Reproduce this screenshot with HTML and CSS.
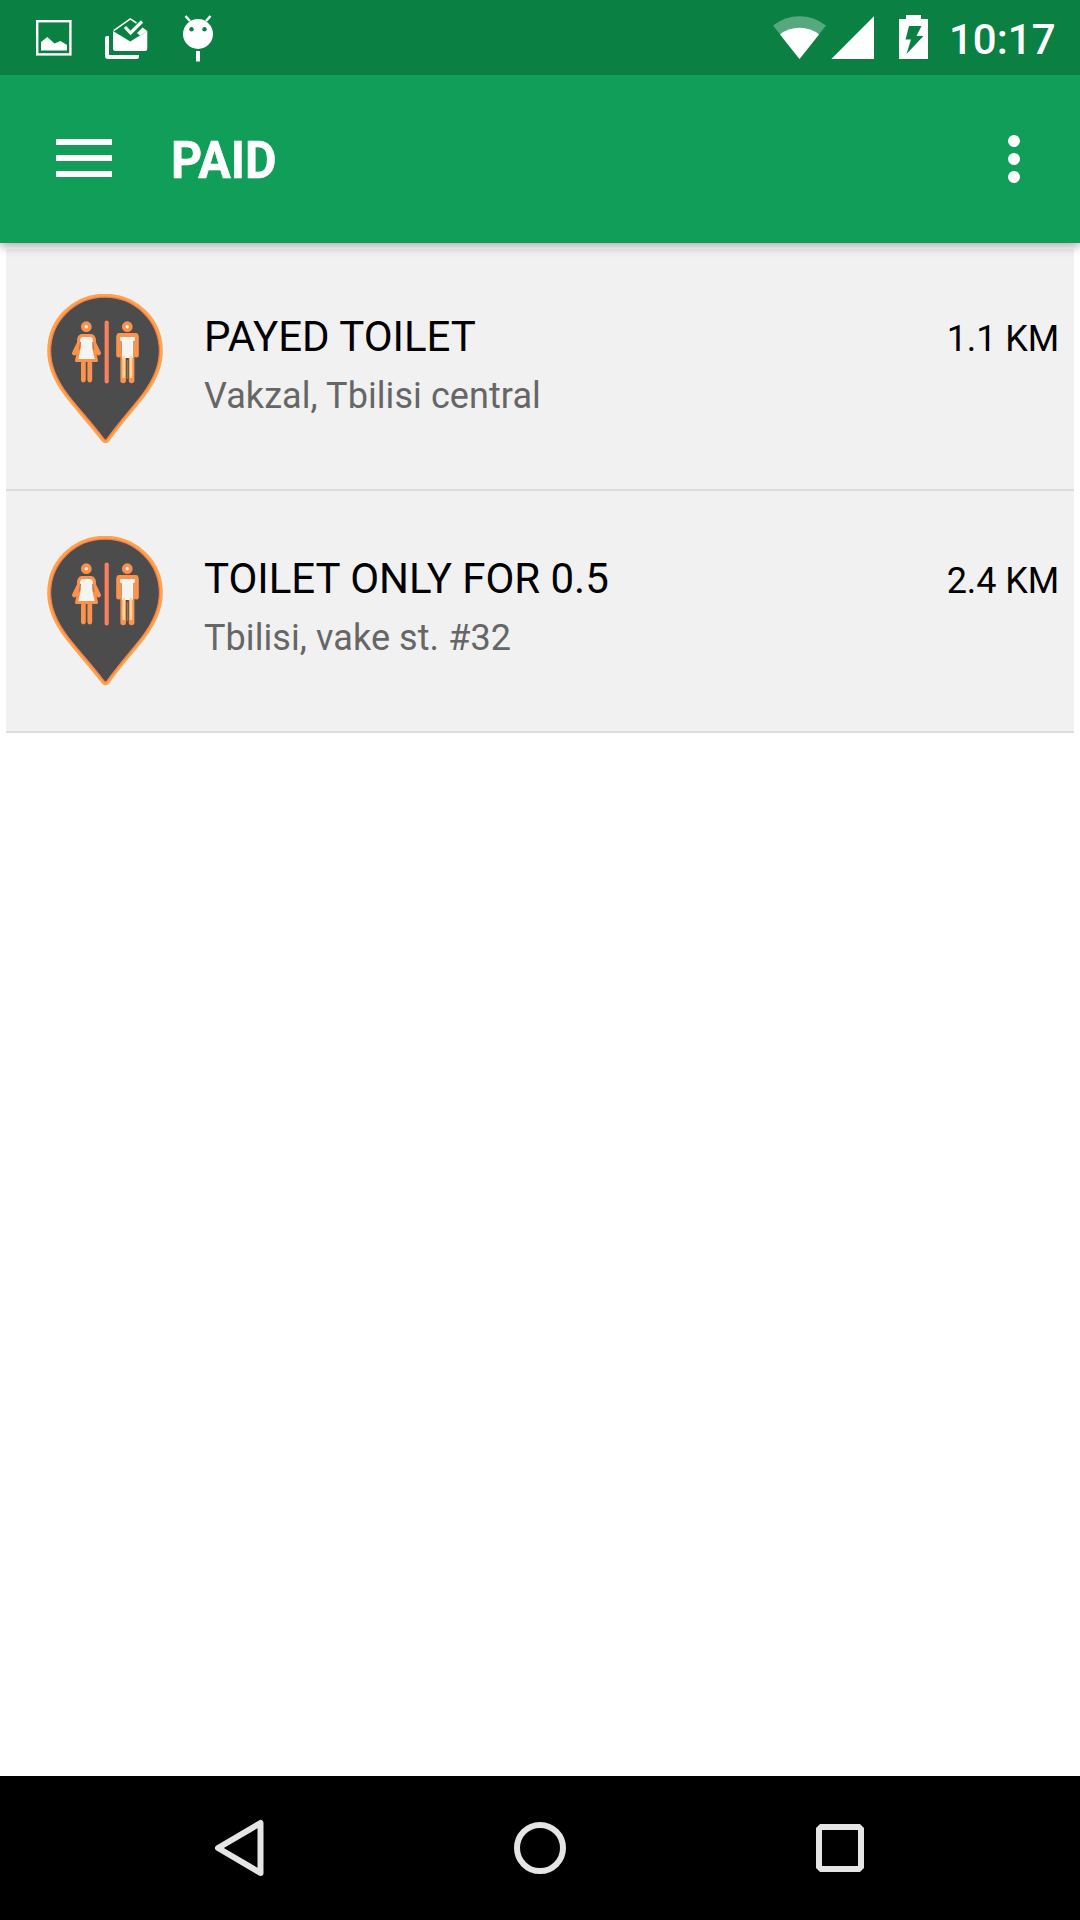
FILE: index.html
```html
<!DOCTYPE html>
<html lang="en">
<head>
<meta charset="utf-8">
<title>Paid</title>
<link rel="stylesheet" href="styles.css">
</head>
<body>
<svg class="defs" width="0" height="0" aria-hidden="true">
  <defs>
    <symbol id="pin" viewBox="0 0 116 150">
      <path d="M58 1.500C27 1.500 2 26 2 57C2 75 10 89 20 102C30 115 43 129 56 146Q58.500 149 61 146C73 129 86 115 96 102C106 89 114 75 114 57C114 26 89 1.500 58 1.500Z" fill="#4c4c4c" stroke="#ffa24b" stroke-width="3.600"/>
      <path d="M58 3.200C28 3.200 3.600 27 3.600 57C3.600 74 11 88 21 101C31 114 45 129 57 145Q58.500 147 60 145C72 129 85 114 95 101C105 88 112.400 74 112.400 57C112.400 27 88 3.200 58 3.200Z" fill="none" stroke="#ef7d4f" stroke-width="1.200"/>
      <path d="M59.700 28.500V87.500" stroke="#f97f5d" stroke-width="4.200" stroke-linecap="round"/>
      <g fill="#fff0dc" stroke="#fb8f4e" stroke-width="3.600">
        <circle cx="39.300" cy="32.700" r="3.600"/>
        <circle cx="80.300" cy="32.700" r="3.600"/>
      </g>
      <g stroke="#fb934e" stroke-linecap="round" stroke-linejoin="round" fill="none">
        <path d="M36.400 69V86M42.800 69V86" stroke-width="4.800"/>
        <path d="M34 45.500L27.500 59M45 45.500L51.500 59" stroke-width="4.800"/>
        <path d="M35 41.500H44Q47 42 47.500 46L46.500 53L49.500 66.500H29.500L32.500 53L31.500 46Q32 42 35 41.500Z" fill="#f5f4ef" stroke-width="3"/>
        <path d="M71.700 43V61M89.300 43V61" stroke-width="5"/>
        <path d="M76.200 62V86.500M84.600 62V86.500" stroke-width="5.600"/>
        <path d="M72 41.200H89" stroke-width="4.600"/>
      </g>
      <path d="M73 43H88V46L86 48V64H75V48L73 46Z" fill="#f5f4ef"/>
      <path d="M76.800 62V84M84 62V84" stroke="#f9d9a7" stroke-width="2.600"/>
      <path d="M80.300 66V85" stroke="#cf8b52" stroke-width=".8"/>
      <path d="M74.300 48V60M86.500 48V60" stroke="#d6a070" stroke-width="1"/>
      <path d="M33.600 48L32 56M45.600 48L47 56" stroke="#8d6d58" stroke-width=".8"/>
    </symbol>
  </defs>
</svg>
<div class="screen">
  <header class="status">
    <div class="status-left">
      <svg width="36" height="36" viewBox="36 20 36 36">
        <rect x="37.200" y="21.200" width="33.200" height="33.200" fill="none" stroke="#fff" stroke-width="2.400"/>
        <path d="M41 42L47.300 37L54.500 43.500L60.500 41L67 45V50.500H41Z" fill="#fff"/>
      </svg>
      <svg width="44" height="42" viewBox="104 18 44 42">
        <path d="M105 37.500Q105 36 107 36H109V55H139V57Q139 59 137 59H108Q105 59 105 56Z" fill="#fff"/>
        <path d="M113 31L130.300 41.500L147.300 31V48.500Q147.300 51 145 51H115.500Q113 51 113 48.500Z" fill="#fff"/>
        <path d="M142.500 27.500L147.300 31L140 35.500L137 33Z" fill="#fff"/>
        <path d="M113.700 30.700L130.300 18.900L136.500 23" fill="none" stroke="#fff" stroke-width="1.500"/>
        <path d="M125 27L130.600 33L142 21.500" fill="none" stroke="#fff" stroke-width="3.200"/>
      </svg>
      <svg width="30" height="47" viewBox="183 15 30 47">
        <path d="M185.500 16L190 21M210.500 16L206 21" stroke="#fff" stroke-width="2.600"/>
        <circle cx="198" cy="34" r="15" fill="#fff"/>
        <circle cx="191.500" cy="29.200" r="2.200" fill="#0b8043"/>
        <circle cx="204.500" cy="29.200" r="2.200" fill="#0b8043"/>
        <path d="M196 51H200V61.500H196Z" fill="#fff"/>
      </svg>
    </div>
    <div class="status-right">
      <svg width="102" height="46" viewBox="772 14 102 46">
        <path d="M799.500 59L773 25.500Q785 16.300 799.500 16.300T826 25.500Z" fill="#58a87f"/>
        <path d="M799.500 59L780 34.500Q788 27.800 799.500 27.800T819 34.500Z" fill="#fff"/>
        <path d="M831.300 59H874V16.300Z" fill="#fff"/>
      </svg>
      <svg class="battery" width="29" height="44" viewBox="899 15 29 44">
        <path d="M906 15H921V19H928V59H899V19H906Z" fill="#fff"/>
        <path d="M909 26H921.500L916.500 36H923.500L906.500 54L911 39.500H905.500Z" fill="#0b8043"/>
      </svg>
      <span class="clock">10:17</span>
    </div>
  </header>
  <div class="appbar">
    <svg width="56" height="38" viewBox="0 0 56 38"><path d="M0 0H56V6H0ZM0 16H56V22H0ZM0 32H56V38H0Z" fill="#fff"/></svg>
    <h1 class="heading">PAID</h1>
    <svg class="more" width="12" height="48" viewBox="0 0 12 48" fill="#fff"><circle cx="6" cy="6" r="6"/><circle cx="6" cy="24" r="6"/><circle cx="6" cy="42" r="6"/></svg>
  </div>
  <main class="list">
    <article class="row">
      <svg class="pin" width="116" height="150"><use href="#pin"/></svg>
      <div class="info">
        <div class="name">PAYED TOILET</div>
        <div class="address">Vakzal, Tbilisi central</div>
      </div>
      <div class="distance">1.1 KM</div>
    </article>
    <article class="row">
      <svg class="pin" width="116" height="150"><use href="#pin"/></svg>
      <div class="info">
        <div class="name">TOILET ONLY FOR 0.5</div>
        <div class="address">Tbilisi, vake st. #32</div>
      </div>
      <div class="distance">2.4 KM</div>
    </article>
  </main>
  <nav class="navbar">
    <svg width="50" height="58" viewBox="215 1819 50 58"><path d="M218 1848L260.500 1823V1873Z" fill="none" stroke="#e5e5e5" stroke-width="6" stroke-linejoin="round"/></svg>
    <svg width="52" height="52" viewBox="0 0 52 52"><circle cx="26" cy="26" r="23" fill="none" stroke="#e5e5e5" stroke-width="6"/></svg>
    <svg width="48" height="48" viewBox="0 0 48 48"><path d="M4 0H44L48 4V44L44 48H4L0 44V4ZM6 6V42H42V6Z" fill="#e5e5e5" fill-rule="evenodd"/></svg>
  </nav>
</div>
</body>
</html>
```
FILE: styles.css
```css
* { box-sizing: border-box; }
body { margin: 0; background: #fff; font-family: Roboto, "Liberation Sans", sans-serif; }
svg { display: block; flex: none; }
.defs { position: absolute; }
.screen { width: 1080px; height: 1920px; display: flex; flex-direction: column; overflow: hidden; }
.status { height: 75px; flex: none; background: #0b8043; display: flex; justify-content: space-between; padding: 0 23px 0 36px; z-index: 2; }
.status-left, .status-right { display: flex; align-items: flex-start; }
.status-left { padding-top: 15px; gap: 32px; }
.status-left svg:nth-child(1) { margin-top: 5px; }
.status-left svg:nth-child(2) { margin-top: 3px; }
.status-left svg:nth-child(3) { margin-left: 3px; }
.status-right { padding-top: 14px; }
.battery { margin: 1px 0 0 25px; }
.clock { width: 108px; margin: 1px 0 0 21px; color: #fff; font-size: 42px; font-weight: 500; line-height: 50px; white-space: nowrap; }
.appbar { height: 168px; flex: none; background: #119e58; display: flex; align-items: flex-start; padding: 64px 60px 0 56px; box-shadow: 0 3px 10px rgba(0, 0, 0, .35); z-index: 1; }
.heading { margin: -8px 0 0 59px; color: #fff; font-size: 52px; line-height: 60px; font-weight: 700; -webkit-text-stroke: .6px #fff; transform: scaleX(.93); transform-origin: left; }
.more { margin: -4px 0 0 auto; }
.list { flex: 1; padding: 6px 6px 0; }
.row { height: 242px; background: #f1f1f1; border-bottom: 2px solid #ddd; display: flex; align-items: flex-start; padding: 45px 15px 0 41px; }
.info { margin: 18px 0 0 41px; flex: 1; }
.name { color: #000; font-size: 42px; line-height: 50px; letter-spacing: -.03px; }
.address { color: #666; font-size: 36px; line-height: 42px; margin-top: 13px; letter-spacing: .08px; }
.distance { color: #000; font-size: 36px; line-height: 42px; margin-top: 24px; letter-spacing: -.1px; }
.navbar { height: 144px; flex: none; background: #000; display: flex; align-items: center; padding-left: 215px; }
.navbar svg:nth-child(2) { margin-left: 249px; }
.navbar svg:nth-child(3) { margin-left: 250px; }
```
